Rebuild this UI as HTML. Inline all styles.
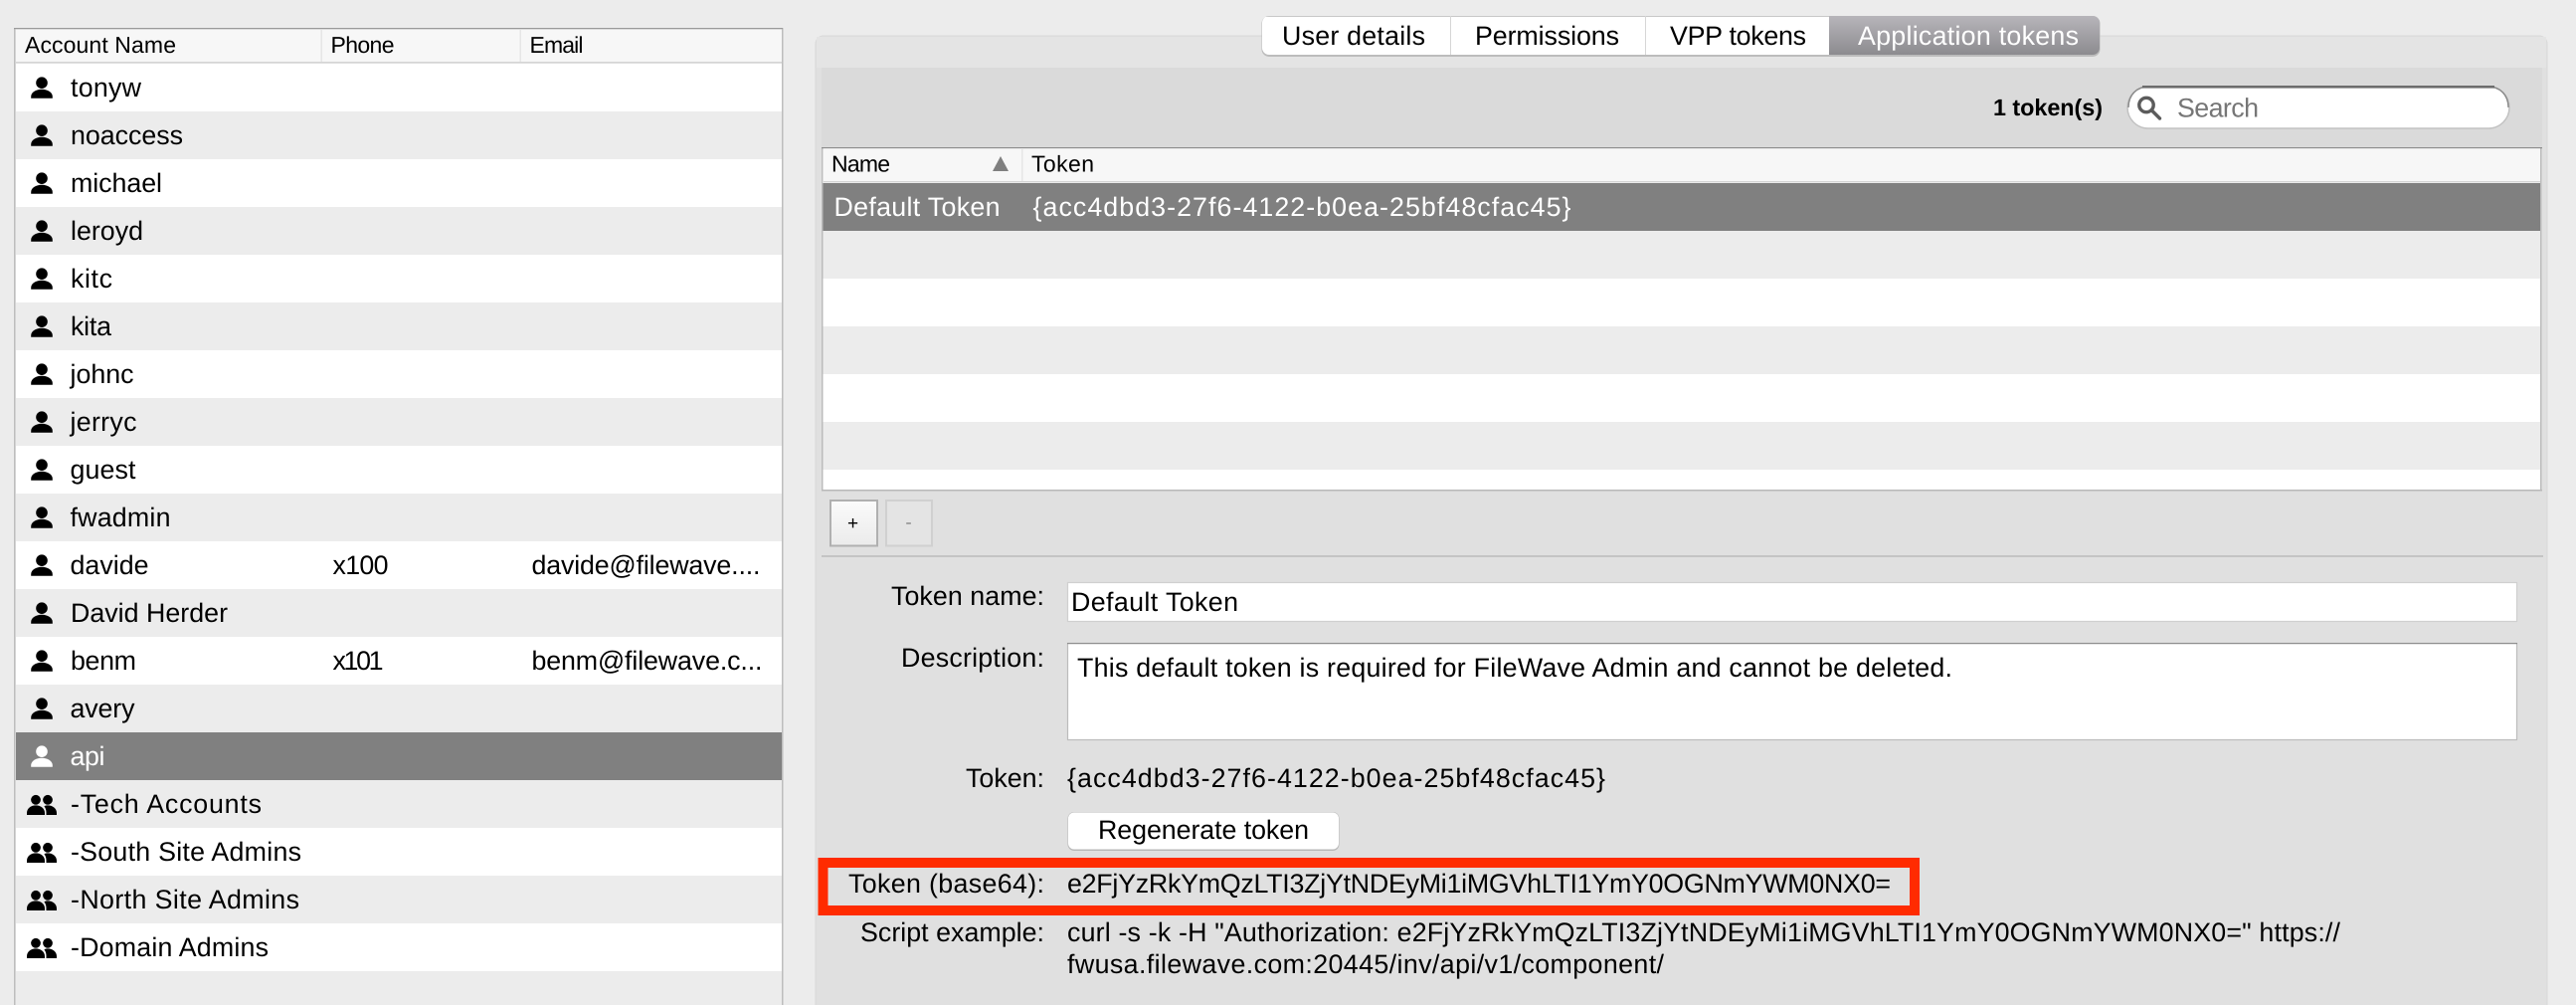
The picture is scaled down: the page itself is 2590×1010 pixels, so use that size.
<!DOCTYPE html>
<html lang="en">
<head>
<meta charset="utf-8">
<title>Application tokens</title>
<style>
html,body{margin:0;padding:0;background:#ececec;width:2590px;height:1010px;overflow:hidden}
svg{display:block}
text{font-family:"Liberation Sans",Arial,sans-serif;font-size:26.8px;fill:#000;text-rendering:geometricPrecision}
.h{font-size:23px}
.w{fill:#fff}
</style>
</head>
<body>
<svg xmlns="http://www.w3.org/2000/svg" width="2590" height="1010" viewBox="0 0 2590 1010">
<defs>
<linearGradient id="sel" x1="0" y1="0" x2="0" y2="1"><stop offset="0" stop-color="#b7b5ba"/><stop offset="1" stop-color="#8c8b8f"/></linearGradient>
<linearGradient id="btn" x1="0" y1="0" x2="0" y2="1"><stop offset="0" stop-color="#fbfbfb"/><stop offset="1" stop-color="#ebebeb"/></linearGradient>
<clipPath id="tabL"><rect x="1269" y="16" width="842" height="39" rx="7"/></clipPath>
<g id="p"><circle cx="42" cy="19.2" r="5.8"/><path d="M31.2 34.8V33C31.2 29 36 25.8 42 25.8S52.8 29 52.8 33V34.8Z"/></g>
<g id="g"><circle cx="36" cy="19.8" r="4.9"/><circle cx="48" cy="19.8" r="4.9"/><path d="M27 35V33C27 28.5 31 25.4 36 25.4S45 28.5 45 33V35Z"/><path d="M46.5 35H57V33C57 28.5 53 25.4 48 25.4C46.5 25.4 45.4 25.7 44.4 26.2C45.8 27.9 46.5 30.2 46.5 32.4Z"/></g>
</defs>

<rect width="2590" height="1010" fill="#ececec"/>

<!-- Left table -->
<rect x="14" y="28" width="1.5" height="982" fill="#bdbdbd"/>
<rect x="786" y="28" width="1.5" height="982" fill="#bdbdbd"/>
<rect x="14" y="28" width="773" height="1.2" fill="#9a9a9a"/>
<rect x="16" y="30" width="770" height="32" fill="#f7f7f7"/>
<rect x="16" y="62" width="770" height="1.5" fill="#d4d4d4"/>
<rect x="322.5" y="30" width="1.5" height="32" fill="#e6e6e6"/>
<rect x="522.5" y="30" width="1.5" height="32" fill="#e6e6e6"/>
<text class="h" x="25" y="53" textLength="152">Account Name</text>
<text class="h" x="332.5" y="53" textLength="64">Phone</text>
<text class="h" x="532.5" y="53" textLength="54">Email</text>

<rect x="16" y="64" width="770" height="48" fill="#fff"/>
<rect x="16" y="160" width="770" height="48" fill="#fff"/>
<rect x="16" y="256" width="770" height="48" fill="#fff"/>
<rect x="16" y="352" width="770" height="48" fill="#fff"/>
<rect x="16" y="448" width="770" height="48" fill="#fff"/>
<rect x="16" y="544" width="770" height="48" fill="#fff"/>
<rect x="16" y="640" width="770" height="48" fill="#fff"/>
<rect x="16" y="736" width="770" height="48" fill="#808080"/>
<rect x="16" y="832" width="770" height="48" fill="#fff"/>
<rect x="16" y="928" width="770" height="48" fill="#fff"/>

<use href="#p" y="64"/><text x="71" y="97" textLength="71">tonyw</text>
<use href="#p" y="112"/><text x="71" y="145" textLength="113">noaccess</text>
<use href="#p" y="160"/><text x="71" y="193" textLength="92">michael</text>
<use href="#p" y="208"/><text x="71" y="241" textLength="73">leroyd</text>
<use href="#p" y="256"/><text x="71" y="289" textLength="42">kitc</text>
<use href="#p" y="304"/><text x="71" y="337" textLength="41">kita</text>
<use href="#p" y="352"/><text x="70.5" y="385" textLength="64">johnc</text>
<use href="#p" y="400"/><text x="70.5" y="433" textLength="67">jerryc</text>
<use href="#p" y="448"/><text x="70.5" y="481" textLength="66">guest</text>
<use href="#p" y="496"/><text x="70.5" y="529" textLength="101">fwadmin</text>
<use href="#p" y="544"/><text x="70.5" y="577" textLength="79">davide</text>
<text x="334.5" y="577" textLength="56">x100</text>
<text x="534.5" y="577" textLength="230">davide@filewave....</text>
<use href="#p" y="592"/><text x="71" y="625" textLength="158">David Herder</text>
<use href="#p" y="640"/><text x="71" y="673" textLength="66">benm</text>
<text x="334.5" y="673" textLength="51">x101</text>
<text x="534.5" y="673" textLength="232">benm@filewave.c...</text>
<use href="#p" y="688"/><text x="70.5" y="721" textLength="65">avery</text>
<use href="#p" y="736" fill="#fff"/><text class="w" x="70.5" y="769" textLength="35">api</text>
<use href="#g" y="784"/><text x="71" y="817" textLength="192">-Tech Accounts</text>
<use href="#g" y="832"/><text x="71" y="865" textLength="232">-South Site Admins</text>
<use href="#g" y="880"/><text x="71" y="913" textLength="230">-North Site Admins</text>
<use href="#g" y="928"/><text x="71" y="961" textLength="199">-Domain Admins</text>

<!-- Right panel -->
<rect x="820" y="36" width="1741" height="1000" rx="8" fill="#e0e0e0"/>
<path d="M820 1010V44A8 8 0 0 1 828 36H2553A8 8 0 0 1 2561 44V1010" fill="none" stroke="#d9d9d9" stroke-width="1"/>
<rect x="821" y="37" width="1739" height="31" fill="#e4e4e4"/>
<rect x="826" y="68" width="1730" height="80" fill="#dadada"/>

<!-- Tabs -->
<rect x="1268.5" y="16" width="843" height="41" rx="7.5" fill="#bcbcbc"/>
<g clip-path="url(#tabL)">
<rect x="1269" y="16" width="570" height="39" fill="#fff"/>
<rect x="1839" y="16" width="272" height="39" fill="url(#sel)"/>
<rect x="1269" y="16" width="570" height="1" fill="#c8c8c8"/>
<rect x="1458" y="16" width="1" height="39" fill="#d6d6d6"/>
<rect x="1654" y="16" width="1" height="39" fill="#d6d6d6"/>
</g>
<text x="1289" y="45" textLength="144">User details</text>
<text x="1483" y="45" textLength="145">Permissions</text>
<text x="1679" y="45" textLength="137">VPP tokens</text>
<text class="w" x="1868" y="45" textLength="222">Application tokens</text>

<!-- Toolbar -->
<text x="2004" y="116" textLength="110" style="font-weight:700;font-size:23.4px">1 token(s)</text>
<rect x="2139" y="87" width="384" height="42" rx="21" fill="#fff" stroke="#c2c2c2" stroke-width="1.5"/>
<path d="M2140 108C2140 95 2149 87 2160 87H2502C2513 87 2522 95 2522 108" fill="none" stroke="#8a8a8a" stroke-width="1.4"/>
<rect x="2154" y="86" width="354" height="2.6" fill="#6d6d6d"/>
<circle cx="2158" cy="105.5" r="7.2" fill="none" stroke="#5c5c5c" stroke-width="3.4"/>
<path d="M2163.5 111L2171.5 119" stroke="#5c5c5c" stroke-width="3.4" stroke-linecap="round"/>
<text x="2189" y="117.5" textLength="82" style="fill:#767676">Search</text>

<!-- Tokens table -->
<rect x="827" y="148" width="1728" height="344" fill="#fff"/>
<rect x="826" y="148" width="1.5" height="345" fill="#bcbcbc"/>
<rect x="2554" y="148" width="1.5" height="345" fill="#bcbcbc"/>
<rect x="826" y="492" width="1730" height="1.5" fill="#b8b8b8"/>
<rect x="826" y="148" width="1730" height="1.2" fill="#8c8c8c"/>
<rect x="828" y="150" width="1726" height="32" fill="#f7f7f7"/>
<rect x="828" y="182" width="1726" height="1.5" fill="#d4d4d4"/>
<rect x="1027" y="150" width="1.5" height="32" fill="#e6e6e6"/>
<text class="h" x="836" y="172.5" textLength="59">Name</text>
<path d="M1006 157L1014 172H998Z" fill="#7f7f7f"/>
<text class="h" x="1037" y="172.5" textLength="63">Token</text>
<rect x="827.5" y="184" width="1726.5" height="48" fill="#808080"/>
<rect x="827.5" y="232" width="1726.5" height="48" fill="#ececec"/>
<rect x="827.5" y="328" width="1726.5" height="48" fill="#ececec"/>
<rect x="827.5" y="424" width="1726.5" height="48" fill="#ececec"/>
<text class="w" x="838.5" y="217" textLength="167">Default Token</text>
<text class="w" x="1038.5" y="217" textLength="541">{acc4dbd3-27f6-4122-b0ea-25bf48cfac45}</text>

<!-- +/- buttons -->
<rect x="835" y="503" width="47" height="45.5" fill="url(#btn)" stroke="#b0b0b0" stroke-width="2"/>
<rect x="891" y="503" width="46" height="45.5" fill="#e4e4e4" stroke="#d0d0d0" stroke-width="2"/>
<text x="857.5" y="532" text-anchor="middle" style="font-size:19px">+</text>
<text x="913.5" y="531" text-anchor="middle" style="font-size:19px;fill:#8c8c8c">-</text>
<rect x="826" y="558" width="1731" height="2" fill="#c4c4c4"/>

<!-- Form -->
<text x="896" y="608" textLength="154">Token name:</text>
<rect x="1073.5" y="585.5" width="1457" height="39" fill="#fff" stroke="#d0d0d0" stroke-width="1.2"/>
<text x="1077" y="614" textLength="168">Default Token</text>

<text x="906" y="670" textLength="144">Description:</text>
<rect x="1073.5" y="646.5" width="1457" height="97" fill="#fff" stroke="#bcbcbc" stroke-width="1.2"/>
<rect x="1073" y="646" width="1458" height="1.2" fill="#8f8f8f"/>
<text x="1083" y="680" textLength="880">This default token is required for FileWave Admin and cannot be deleted.</text>

<text x="971" y="791" textLength="79">Token:</text>
<text x="1073" y="791" textLength="541">{acc4dbd3-27f6-4122-b0ea-25bf48cfac45}</text>

<rect x="1073.5" y="816" width="273" height="39" rx="6.5" fill="#b8b8b8"/>
<rect x="1074" y="816.5" width="272" height="37" rx="6" fill="#fff"/>
<text x="1104" y="843" textLength="212">Regenerate token</text>

<rect x="827.5" y="867" width="1097.5" height="48" fill="none" stroke="#ff2b00" stroke-width="10"/>
<text x="853" y="897" textLength="197">Token (base64):</text>
<text x="1073" y="897" textLength="828">e2FjYzRkYmQzLTI3ZjYtNDEyMi1iMGVhLTI1YmY0OGNmYWM0NX0=</text>

<text x="865" y="946" textLength="185">Script example:</text>
<text x="1073" y="946" textLength="1280">curl -s -k -H "Authorization: e2FjYzRkYmQzLTI3ZjYtNDEyMi1iMGVhLTI1YmY0OGNmYWM0NX0=" https://</text>
<text x="1073" y="978" textLength="600">fwusa.filewave.com:20445/inv/api/v1/component/</text>
</svg>
</body>
</html>
